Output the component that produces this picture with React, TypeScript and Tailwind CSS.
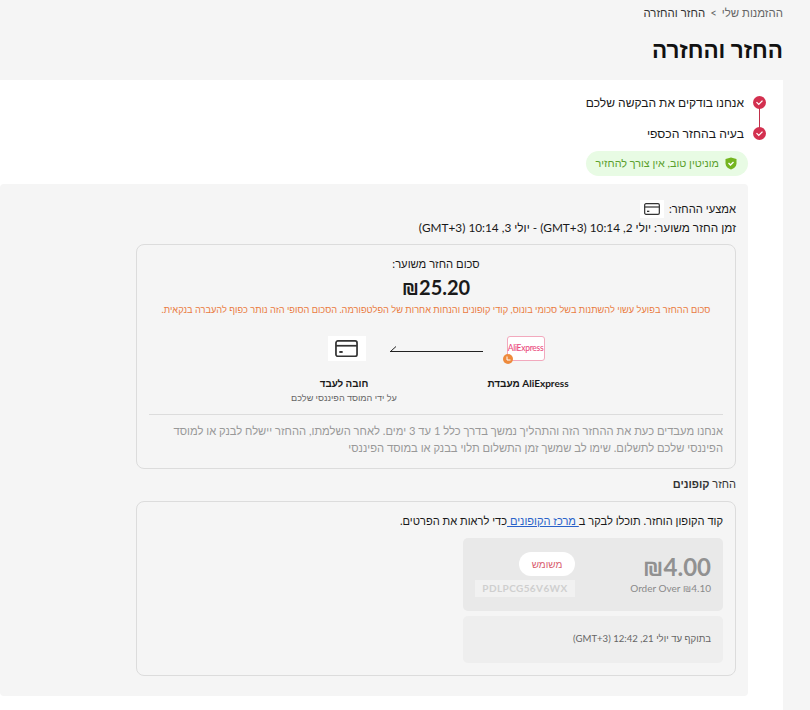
function CardGlyph({ width = 16 }: { width?: number }) {
  return (
    <svg width={width} height={(width * 18) / 24} viewBox="0 0 24 18" fill="none" stroke="#333" strokeWidth="1.8">
      <rect x="1" y="1" width="22" height="16" rx="2" />
      <path d="M1 6h22" />
      <path d="M4.500 12.500h3.500" strokeWidth="2" />
    </svg>
  );
}

function StepDot() {
  return (
    <span className="flex h-[13px] w-[13px] shrink-0 items-center justify-center rounded-full bg-[#d3304f]">
      <svg width="9" height="9" viewBox="0 0 12 12" fill="none" stroke="#fff" strokeWidth="1.8">
        <path d="M2 5.500 5 8.500 10 3.500" />
      </svg>
    </span>
  );
}

function Shield() {
  return (
    <svg width="12" height="13" viewBox="0 0 12 13">
      <path d="M6 .5 11.500 2v4.500c0 3-2.400 5-5.500 6-3.100-1-5.500-3-5.500-6V2z" fill="#74b51f" />
      <path d="M3.500 6 5.500 8l3-3" fill="none" stroke="#fff" strokeWidth="1.4" />
    </svg>
  );
}

export default function App() {
  return (
    <div
      dir="rtl"
      className="h-[710px] w-[810px] overflow-hidden bg-[#f5f5f5] pr-[27px] text-[#191919] [font-family:'Lato','Liberation_Sans',sans-serif]"
    >
      <nav className="flex h-[26px] items-center gap-[5px] text-[11.4px] leading-none">
        <span className="text-[#666]">ההזמנות שלי</span>
        <span className="text-[#666]">&gt;</span>
        <span className="text-[#333]">החזר והחזרה</span>
      </nav>
      <h1 className="mt-[8px] h-[46px] text-[22.5px] leading-[32px] font-bold text-[#111]">החזר והחזרה</h1>

      <main className="h-[630px] bg-white">
        <div className="relative pt-[15px] pr-[17px]">
          <span className="absolute top-[28px] right-[23px] h-[20px] w-px bg-[#c0304a]" />
          <div className="flex h-[15px] items-center gap-[9px] text-[12px]">
            <StepDot />
            <span>אנחנו בודקים את הבקשה שלכם</span>
          </div>
          <div className="mt-[16px] flex h-[15px] items-center gap-[9px] text-[12.2px]">
            <StepDot />
            <span className="translate-y-px">בעיה בהחזר הכספי</span>
          </div>
        </div>

        <div className="mt-[10px] mr-[35px] flex h-[25px] w-[162px] items-center gap-[6px] rounded-full bg-[#e8fbe4] pr-[11px] text-[10.8px] whitespace-nowrap text-[#5aa02c]">
          <Shield />
          <span>מוניטין טוב, אין צורך להחזיר</span>
        </div>

        <section className="mt-[8px] mr-[35px] h-[512px] rounded-[4px] bg-[#f5f5f5] pt-[16px] pr-[12px]">
          <div className="flex h-[18px] items-center gap-[5px] text-[11.2px]">
            <span>אמצעי ההחזר:</span>
            <span className="flex h-[18px] w-[24px] items-center justify-center bg-white">
              <CardGlyph />
            </span>
          </div>
          <p className="mt-[2px] h-[20px] text-[11.8px] leading-[16px]">
            זמן החזר משוער: יולי 2, 10:14 (GMT+3) - יולי 3, 10:14 (GMT+3)
          </p>

          <div className="mt-[4px] h-[225px] w-[600px] rounded-[8px] border border-[#dcdcdc] px-[12px]">
            <p className="mt-[11px] text-center text-[11.2px] leading-[16px]">סכום החזר משוער:</p>
            <p className="mt-[1px] text-center text-[20px] leading-[28px] font-bold text-[#1a1a1a]">₪25.20</p>
            <p className="mt-[2px] text-center text-[9.25px] leading-[14px] whitespace-nowrap text-[#ea7b3f]">
              סכום ההחזר בפועל עשוי להשתנות בשל סכומי בונוס, קודי קופונים והנחות אחרות של הפלטפורמה. הסכום הסופי הזה נותר כפוף להעברה בנקאית.
            </p>

            <div className="mt-[19px] flex items-center justify-center gap-[24px]">
              <span className="relative flex h-[25px] w-[38px] items-center justify-center rounded-[3px] border border-[#f2a9bd] bg-white">
                <span className="text-[8.5px] font-medium tracking-[-0.3px] text-[#ea4a7d]" dir="ltr">AliExpress</span>
                <span className="absolute -bottom-[4px] -left-[5px] flex h-[10px] w-[10px] items-center justify-center rounded-full bg-[#ee8a3c]">
                  <svg width="6" height="6" viewBox="0 0 6 6" fill="none" stroke="#fff" strokeWidth="1">
                    <path d="M2 .5v3.500h3.500" />
                  </svg>
                </span>
              </span>
              <svg width="93" height="8" viewBox="0 0 93 8" fill="none" stroke="#222" strokeWidth="1">
                <path d="M0 6.500h93M.5 6.500 6 1.500" />
              </svg>
              <span className="flex h-[25px] w-[38px] items-center justify-center bg-white">
                <CardGlyph width={23} />
              </span>
            </div>

            <div className="mt-[15px] flex justify-center gap-[14px] text-center">
              <div className="w-[170px]">
                <p className="text-[10px] leading-[14px] font-bold">AliExpress מעבדת</p>
              </div>
              <div className="w-[170px]">
                <p className="text-[9.800px] leading-[14px] font-bold">חובה לעבד</p>
                <p className="mt-[1px] text-[9.100px] leading-[14px] text-[#666]">על ידי המוסד הפיננסי שלכם</p>
              </div>
            </div>

            <div className="mt-[9px] border-t border-[#dcdcdc] pt-[7px] text-[11.2px] leading-[17px] whitespace-nowrap text-[#999]">
              <p>אנחנו מעבדים כעת את ההחזר הזה והתהליך נמשך בדרך כלל 1 עד 3 ימים. לאחר השלמתו, ההחזר יישלח לבנק או למוסד</p>
              <p>הפיננסי שלכם לתשלום. שימו לב שמשך זמן התשלום תלוי בבנק או במוסד הפיננסי</p>
            </div>
          </div>

          <p className="mt-[7px] h-[16px] text-[11px] leading-[16px] text-[#333]">
            החזר <span className="font-bold">קופונים</span>
          </p>

          <div className="mt-[9px] h-[175px] w-[600px] rounded-[8px] border border-[#dcdcdc] px-[12px] pt-[11px]">
            <p className="text-[11.1px] leading-[16px]">
              קוד הקופון הוחזר. תוכלו לבקר ב<span className="text-[#2a62c9] underline"> מרכז הקופונים </span>כדי לראות את הפרטים.
            </p>

            <div className="mt-[9px] w-[260px]">
              <div className="flex h-[73px] justify-between rounded-[5px] bg-[#e9e9e9] px-[12px] pt-[14px]">
                <div>
                  <p className="text-[24px] leading-[30px] font-bold text-[#919191]">₪4.00</p>
                  <p className="mt-[-1px] text-[10px] leading-[14px] text-[#8a8a8a]">Order Over ₪4.10</p>
                </div>
                <div className="flex w-[100px] flex-col items-start">
                  <span className="flex h-[24px] w-[56px] items-center justify-center rounded-full bg-white text-[10px] text-[#d9606f]">
                    משומש
                  </span>
                  <span className="mt-[4px] flex h-[17px] w-[100px] items-center justify-center bg-[#f1f1f1] text-[10px] font-bold tracking-[0.4px] text-[#cfcfcf]" dir="ltr">
                    PDLPCG56V6WX
                  </span>
                </div>
              </div>
              <div className="mt-[5px] flex h-[47px] items-center rounded-[5px] bg-[#eeeeee] px-[12px] text-[9.600px] text-[#666]">
                בתוקף עד יולי 21, 12:42 (GMT+3)
              </div>
            </div>
          </div>
        </section>
      </main>
    </div>
  );
}
